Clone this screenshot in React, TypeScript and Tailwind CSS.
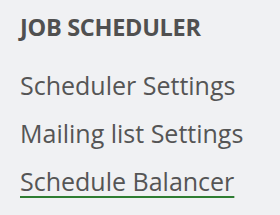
import React from "react";

export default function App() {
  return (
    <div className="w-[280px] h-[215px] bg-[#f0f1f3] pl-5 pt-[12px] text-[#555555]" style={{ fontFamily: '"Open Sans", "Noto Sans", sans-serif' }}>
      <h2 className="text-[23.5px] leading-[30px] font-bold text-[#505050] tracking-[-0.3px]">JOB SCHEDULER</h2>
      <ul className="mt-[19px] text-[25px] leading-[48px]">
        <li><a>Scheduler Settings</a></li>
        <li><a>Mailing list Settings</a></li>
        <li><a className="underline decoration-[#2e7d32] decoration-2 underline-offset-[5px]">Schedule Balancer</a></li>
      </ul>
    </div>
  );
}
